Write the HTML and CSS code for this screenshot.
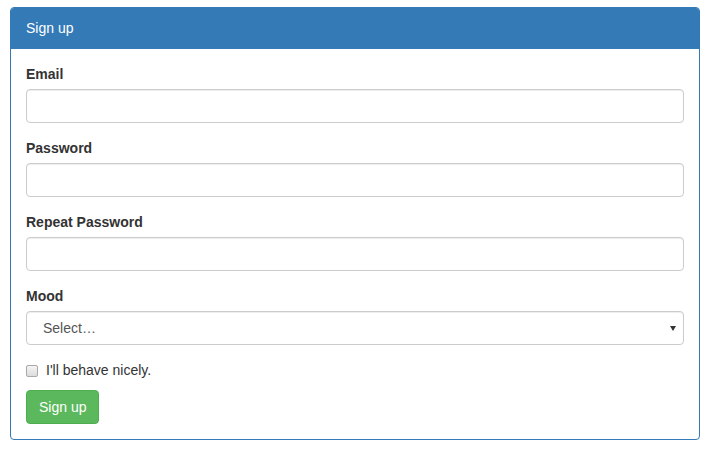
FILE: index.html
```html
<!DOCTYPE html>
<html>
<head>
<meta charset="utf-8">
<link rel="stylesheet" href="styles.css">
</head>
<body>
<div class="panel">
  <div class="panel-heading">Sign up</div>
  <form class="panel-body">
    <div class="form-group">
      <label class="control-label">Email</label>
      <input class="form-control" type="text">
    </div>
    <div class="form-group">
      <label class="control-label">Password</label>
      <input class="form-control" type="password">
    </div>
    <div class="form-group">
      <label class="control-label">Repeat Password</label>
      <input class="form-control" type="password">
    </div>
    <div class="form-group">
      <label class="control-label">Mood</label>
      <div class="select-wrap">
        <select class="form-control select">
          <option>Select…</option>
        </select>
      </div>
    </div>
    <div class="checkbox">
      <label><input type="checkbox" class="check"> I'll behave nicely.</label>
    </div>
    <button type="button" class="btn">Sign up</button>
  </form>
</div>
</body>
</html>
```
FILE: styles.css
```css
* { box-sizing: border-box; }
body {
  margin: 7px 1px 0 10px;
  font-family: "Liberation Sans", Arial, sans-serif;
  font-size: 14px;
  line-height: 20px;
  color: #333;
  background: #fff;
}
.panel {
  border: 1px solid #337ab7;
  border-radius: 4px;
  background: #fff;
  box-shadow: 0 1px 1px rgba(0,0,0,.05);
}
.panel-heading {
  background: #337ab7;
  color: #fff;
  padding: 10px 15px;
  border-bottom: 1px solid #337ab7;
  border-radius: 3px 3px 0 0;
}
.panel-body {
  display: block;
  margin: 0;
  padding: 15px;
}
.form-group { margin-bottom: 15px; }
.control-label {
  display: block;
  font-weight: bold;
  margin-bottom: 5px;
}
.form-control {
  display: block;
  width: 100%;
  height: 34px;
  padding: 6px 12px;
  font-family: inherit;
  font-size: 14px;
  line-height: 20px;
  color: #555;
  background: #fff;
  border: 1px solid #ccc;
  border-radius: 4px;
  box-shadow: inset 0 1px 1px rgba(0,0,0,.075);
  outline: none;
}
.select-wrap { position: relative; }
.select {
  appearance: none;
  -webkit-appearance: none;
  padding-left: 16px;
}
.select-wrap::after {
  content: "";
  position: absolute;
  right: 8px;
  top: 15px;
  border-left: 3px solid transparent;
  border-right: 3px solid transparent;
  border-top: 5px solid #333;
}
.checkbox {
  margin: 0 0 10px;
}
.checkbox label {
  display: flex;
  align-items: center;
  gap: 8px;
  cursor: pointer;
}
.check {
  appearance: none;
  -webkit-appearance: none;
  width: 12px;
  height: 12px;
  margin: 1px 0 0 0;
  border: 1px solid #a9a9a9;
  border-radius: 2px;
  background: linear-gradient(#f4f4f4, #dcdcdc);
}
.btn {
  display: block;
  height: 34px;
  padding: 6px 12px;
  font-family: inherit;
  font-size: 14px;
  line-height: 20px;
  color: #fff;
  background: #5cb85c;
  border: 1px solid #4cae4c;
  border-radius: 4px;
  cursor: pointer;
}
```
